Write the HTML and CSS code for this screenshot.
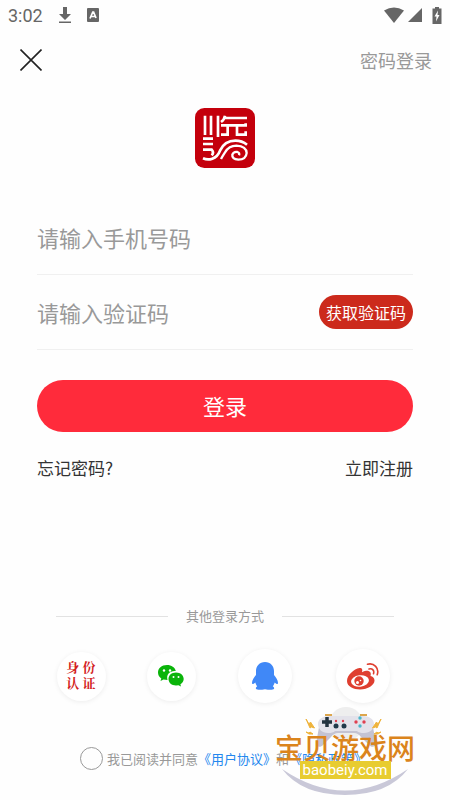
FILE: index.html
```
<!DOCTYPE html>
<html lang="zh-CN">
<head>
    <meta charset="UTF-8">
    <meta name="viewport" content="width=device-width, initial-scale=1.0">
    <title>登录</title>
    <link rel="stylesheet" href="styles.css">
</head>
<body>
    <div id="wrapper">
        <div class="status-bar">
            <span class="time">3:02</span>
            <svg class="status-download" width="14" height="18" viewBox="0 0 14 18">
                <path d="M5 1h4v7h4l-6 6-6-6h4z M1 15.500h12v1.500H1z"/>
            </svg>
            <svg class="status-app" width="12" height="14" viewBox="0 0 12 14">
                <rect width="12" height="14" rx="1"/>
                <path d="M3 10.500L5.800 4h.8L9 10M4 8.500h4" fill="none" stroke="#fff" stroke-width="1.700"/>
            </svg>
            <div class="status-right">
                <svg width="20" height="16" viewBox="0 0 20 16">
                    <path d="M0 3.500Q10-2.500 20 3.500L10 16z"/>
                </svg>
                <svg width="14" height="14" viewBox="0 0 14 14">
                    <path d="M14 0v14H0z"/>
                </svg>
                <svg class="battery" width="10" height="17" viewBox="0 0 10 17">
                    <path d="M3 0h4v1.500h2.500V17H.5V1.500H3z"/>
                    <path d="M6 3.500L2.500 9.500h2L4 14.500l3.500-6.500h-2z" fill="#fff"/>
                </svg>
            </div>
        </div>

        <header class="header">
            <button class="close" type="button" aria-label="关闭">
                <svg width="22" height="22" viewBox="0 0 22 22">
                    <path d="M.5.5l21 21M21.500.5l-21 21" stroke="#222" stroke-width="1.600"/>
                </svg>
            </button>
            <a class="switch" href="#">密码登录</a>
        </header>

        <div class="logo">
            <svg width="60" height="60" viewBox="0 0 180 180" fill="none" stroke="#fff" stroke-width="8">
                <rect width="180" height="180" rx="28" fill="#c4000c" stroke="none"/>
                <path d="M30 23v58M48 23v58M24 92h30M24 108h30"/>
                <path d="M69 23v64M90 23q-2 12-12 19M88 30h68M78 52h78M152 46v10M78 80h20M98 52v32M126 52v32M152 70v14M126 80h30"/>
                <path d="M24 125h26q8 9 0 17M24 151q14 6 28 1q16-6 23-24q14-30 46-30q20 0 35 12"/>
                <path d="M78 153q4-8 12-20q12-20 34-20q30 2 31 22q-2 20-25 20q-20-2-18-15q4-10 15-8q8 3 5 10" stroke-width="7"/>
            </svg>
        </div>

        <form class="form">
            <div class="row">
                <input class="field" type="tel" placeholder="请输入手机号码" aria-label="手机号码">
            </div>
            <div class="row">
                <input class="field" type="text" placeholder="请输入验证码" aria-label="验证码">
                <button class="code-btn" type="button">获取验证码</button>
            </div>
            <button class="login-btn" type="button">登录</button>
            <div class="links">
                <a href="#">忘记密码?</a>
                <a href="#">立即注册</a>
            </div>
        </form>

        <div class="other">
            <div class="divider">其他登录方式</div>
            <div class="socials">
                <button class="circle identity" type="button">身 份<br>认 证</button>
                <button class="circle" type="button" aria-label="微信">
                    <svg width="28" height="24" viewBox="0 0 28 24">
                        <path d="M10 1C4.500 1 1 4.300 1 8.500c0 2.500 1.200 4.600 3.300 6L3.500 17l3-1.500 4 .6C9 10 13 6.500 18.800 7 18 3.500 14.500 1 10 1z" fill="#0ab40a"/>
                        <path d="M19 8.500c-4.400 0-7.500 2.800-7.500 6.500s3.200 6.500 7.500 6.500l2.500-.3L24 22.500l-.6-2.300c2-1.200 3.300-3.100 3.300-5.200 0-3.700-3.300-6.500-7.700-6.500z" fill="#0ab40a"/>
                        <g fill="#fff"><circle cx="7" cy="6.500" r="1.200"/><circle cx="13" cy="6.500" r="1.200"/><circle cx="16.500" cy="13" r="1"/><circle cx="21.500" cy="13" r="1"/></g>
                    </svg>
                </button>
                <button class="circle large" type="button" aria-label="QQ">
                    <svg width="26" height="28" viewBox="0 0 26 28">
                        <path d="M13 0C7.500 0 4 4 4 9v4C1.800 15.500 0 18.500 0 21c0 1.500 1 1.500 3.300-.5.4 1.600 1 2.600 1.900 3.700-2.200 1.300-1.800 3.600 1.300 3.600 3 0 4.500-.3 6.500-.6 2 .3 3.500.6 6.500.6 3.100 0 3.500-2.300 1.300-3.600.9-1.100 1.500-2.100 1.900-3.700C25 22.500 26 22.500 26 21c0-2.500-1.800-5.500-4-8V9C22 4 18.500 0 13 0z" fill="#4088f7"/>
                    </svg>
                </button>
                <button class="circle large" type="button" aria-label="微博">
                    <svg width="32" height="27" viewBox="0 0 32 27">
                        <path d="M12.500 5C7 6 0 12 0 18c0 5.500 6.500 8.500 13 8.500 8 0 14.500-4.500 14.500-9 0-2.500-1.800-4-4-4.500.8-2.500.2-4.500-2-5-1.700-.4-4 .2-6.500 1.200C15.800 6.500 15 4.500 12.500 5z" fill="#df3f30"/>
                        <ellipse cx="13" cy="18" rx="9" ry="5.800" transform="rotate(-7 13 18)" fill="#fff"/>
                        <circle cx="12" cy="18" r="4.700" fill="#df3f30"/>
                        <circle cx="10.500" cy="19.500" r="1.500" fill="#fff"/><circle cx="13.500" cy="17.500" r=".8" fill="#fff"/>
                        <path d="M20.500 1.200c6.500-1.800 12 4 9.700 10.500M22 6c3.500-1 5.500 1.800 4.500 4.700" fill="none" stroke="#df3f30" stroke-width="1.600" stroke-linecap="round"/>
                    </svg>
                </button>
            </div>
        </div>

        <footer class="footer">
            <input type="checkbox" id="agree">
            <label for="agree">我已阅读并同意</label>
            <a href="#">《用户协议》</a>
            <span>和</span>
            <a href="#">《隐私政策》</a>
        </footer>

        <!-- site badge floating over the footer -->
        <div class="badge">
            <svg class="badge-art" width="140" height="90" viewBox="0 0 140 90">
                <circle cx="71" cy="17" r="17" fill="#eee"/>
                <path d="M7 62Q70 105 133 62Q113 88 70 88Q27 88 7 62z" fill="#c9c8d8"/>
                <path d="M52 12h38c4 0 7 3 8 8l3 17c0 3-5 4-7 1l-8-8q-3-4-7-4H63q-4 0-7 4l-8 8c-2 3-7 2-7-1l3-17c1-5 4-8 8-8z" fill="#c4c3d2"/>
                <path d="M54 9h34c6 0 11 3 11 8s-4 9-10 9q-5 0-7-2H60q-2 2-7 2c-6 0-10-4-10-9s5-8 11-8z" fill="#e3e2ea"/>
                <path d="M50 8h7M85 8h7" stroke="#dda64c" stroke-width="2"/>
                <path d="M52 10v10M47 15h10" stroke="#23333f" stroke-width="3.500"/>
                <g fill="#20394a"><circle cx="61" cy="19" r="2.500"/><circle cx="69" cy="19" r="2.500"/></g>
                <g fill="#df4050"><circle cx="61" cy="14" r="1.200"/><circle cx="68" cy="14" r="1.200"/><circle cx="81" cy="15" r="1.700"/><circle cx="89" cy="15" r="1.700"/></g>
                <circle cx="85" cy="11" r="1.700" fill="#4bb8ca"/><circle cx="85" cy="19" r="1.700" fill="#4bb8ca"/>
                <path d="M31 12l3 5 1.500-2 4 6-3-1-1.500 1zM31 25l3 1 1-1 3 2-3 0-1 0zM106 12l-3 5-1.500-2-4 6 3-1 1.500 1zM106 25l-3 1-1-1-3 2 3 0 1 0z" fill="#efb43d" stroke="#efb43d"/>
            </svg>
            <div class="badge-name">宝贝游戏网</div>
            <div class="badge-url">baobeiy.com</div>
        </div>
    </div>
</body>
</html>
```
FILE: styles.css
```
*{
    margin: 0;
    padding: 0;
    box-sizing: border-box;
}
body{
    font-family: "Noto Sans CJK SC", sans-serif;
    color: #333;
    background-color: #fefefe;
}
button{
    border: none;
    background: none;
    font-family: inherit;
    cursor: pointer;
}
a{
    color: inherit;
    text-decoration: none;
}
svg{
    display: block;
}
#wrapper{
    position: relative;
    min-height: 100vh;
    display: flex;
    flex-direction: column;
    overflow: hidden;
}
.status-bar{
    height: 30px;
    padding: 0 8px;
    display: flex;
    align-items: center;
    color: #666;
    fill: #666;
    font-family: Roboto, sans-serif;
    font-size: 18px;
}
.status-download{
    margin-left: 15px;
}
.status-app{
    margin-left: 15px;
}
.status-right{
    margin-left: auto;
    display: flex;
    align-items: center;
    gap: 4px;
}
.battery{
    margin-left: 6px;
}
.header{
    height: 60px;
    padding: 0 18px 0 20px;
    display: flex;
    align-items: center;
    justify-content: space-between;
}
.switch{
    font-size: 18px;
    color: #999;
}
.logo{
    margin-top: 18px;
    display: flex;
    justify-content: center;
}
.form{
    margin-top: 32px;
    padding: 0 37px;
}
.row{
    height: 75px;
    display: flex;
    align-items: center;
    border-bottom: 1px solid #f0f0f0;
}
.field{
    flex: 1;
    min-width: 0;
    height: 40px;
    border: none;
    outline: none;
    background: none;
    font-family: inherit;
    font-size: 22px;
}
.field::placeholder{
    color: #999;
}
.code-btn{
    height: 34px;
    padding: 0 7px;
    border-radius: 17px;
    font-size: 16px;
    color: white;
    background-color: #cc2a1c;
}
.login-btn{
    width: 100%;
    height: 52px;
    margin-top: 30px;
    padding-bottom: 2px;
    border-radius: 26px;
    font-size: 22px;
    color: white;
    background-color: #ff2b3b;
}
.links{
    margin-top: 23px;
    display: flex;
    justify-content: space-between;
    font-size: 17px;
}
.other{
    margin-top: auto;
}
.divider{
    padding: 0 56px;
    display: flex;
    align-items: center;
    gap: 18px;
    font-size: 13px;
    line-height: 20px;
    color: #999;
}
.divider::before,
.divider::after{
    content: "";
    flex: 1;
    height: 1px;
    background-color: #e2e2e2;
}
.socials{
    height: 56px;
    margin-top: 22px;
    padding: 0 38px 0 36px;
    display: grid;
    grid-template-columns: 45fr 45fr 49fr 49fr;
    align-items: center;
    justify-items: center;
}
.circle{
    width: 49px;
    height: 49px;
    display: flex;
    align-items: center;
    justify-content: center;
    border-radius: 50%;
    background-color: white;
    box-shadow: 0 1px 5px rgba(0, 0, 0, 0.07);
}
.circle.large{
    width: 54px;
    height: 54px;
}
.identity{
    font-family: "Liberation Serif", "Noto Serif CJK SC", "Noto Sans CJK SC", serif;
    font-size: 13px;
    font-weight: bold;
    line-height: 16px;
    white-space: nowrap;
    color: #d32020;
}
.footer{
    height: 30px;
    margin: 39px 0 27px 80px;
    display: flex;
    align-items: center;
    font-size: 13px;
    white-space: nowrap;
    color: #999;
}
.footer input{
    appearance: none;
    width: 23px;
    height: 23px;
    margin-right: 4px;
    border: 1px solid #999;
    border-radius: 50%;
}
.footer input:checked{
    background-color: #ff2b3b;
}
.footer a{
    color: #2387ee;
}
.badge{
    position: absolute;
    right: 35px;
    bottom: 3px;
    width: 140px;
    height: 90px;
    padding-top: 26px;
    display: flex;
    flex-direction: column;
    align-items: center;
    pointer-events: none;
}
.badge-art{
    position: absolute;
    top: 0;
    left: 0;
}
.badge-name{
    position: relative;
    font-size: 28px;
    line-height: 28px;
    font-weight: 500;
    white-space: nowrap;
    color: #db841c;
}
.badge-url{
    position: relative;
    padding: 0 3px;
    font-family: Roboto, sans-serif;
    font-size: 15px;
    line-height: 18px;
    color: white;
    background-color: #e8cc30;
}
```
